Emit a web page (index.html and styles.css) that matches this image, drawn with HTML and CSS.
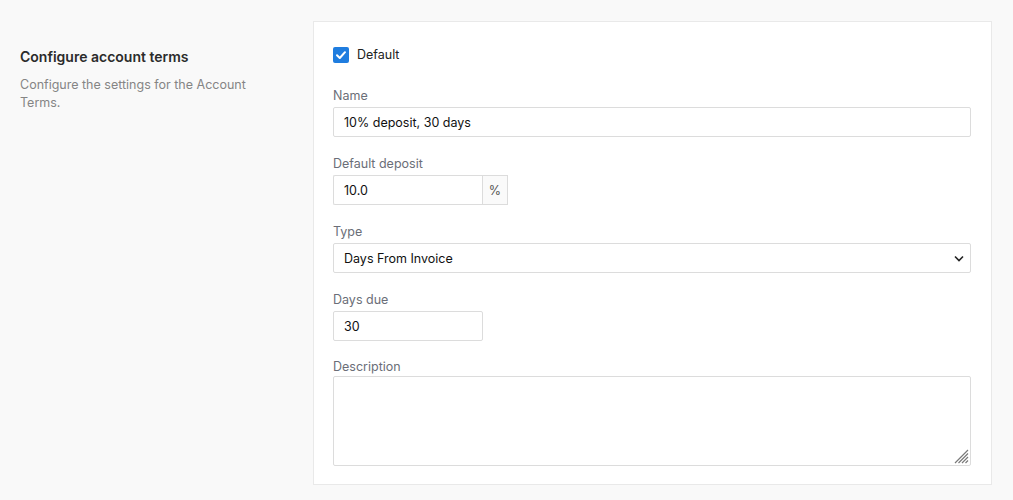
FILE: index.html
```html
<!DOCTYPE html>
<html>
<head>
<meta charset="utf-8">
<link rel="stylesheet" href="styles.css">
</head>
<body>
<div class="page">
  <div class="intro">
    <h2 class="intro-title">Configure account terms</h2>
    <p class="intro-text">Configure the settings for the Account Terms.</p>
  </div>
  <div class="card">
    <div class="check-row">
      <span class="check-box">
        <svg width="12" height="12" viewBox="0 0 12 12"><path d="M2 6.2 L4.8 9 L10 3.2" fill="none" stroke="#fff" stroke-width="2" stroke-linecap="round" stroke-linejoin="round"/></svg>
      </span>
      <span class="check-label">Default</span>
    </div>
    <div class="group">
      <div class="label">Name</div>
      <div class="input full">10% deposit, 30 days</div>
    </div>
    <div class="group">
      <div class="label">Default deposit</div>
      <div class="input-group">
        <div class="input short">10.0</div>
        <div class="addon">%</div>
      </div>
    </div>
    <div class="group">
      <div class="label">Type</div>
      <div class="input full select">
        <span>Days From Invoice</span>
        <svg width="10" height="7" viewBox="0 0 10 7"><path d="M1 1.5 L5 5.5 L9 1.5" fill="none" stroke="#222" stroke-width="1.6"/></svg>
      </div>
    </div>
    <div class="group tight">
      <div class="label">Days due</div>
      <div class="input short">30</div>
    </div>
    <div class="group last">
      <div class="label">Description</div>
      <div class="textarea">
        <svg class="grip" width="15" height="15" viewBox="0 0 15 15"><path d="M14 1 L1 14 M14 4.5 L4.5 14 M14 8 L8 14 M14 11.5 L11.5 14" stroke="#7a7a7a" stroke-width="1.2"/></svg>
      </div>
    </div>
  </div>
</div>
</body>
</html>
```
FILE: styles.css
```css
html, body {
  margin: 0;
  padding: 0;
  background: #f9f9f9;
  font-family: Inter, Roboto, "Liberation Sans", sans-serif;
}
.page {
  display: flex;
  padding: 21px 21px 0 20px;
  gap: 33px;
}
.intro {
  width: 260px;
  padding-top: 27px;
}
.intro-title {
  margin: 0;
  font-size: 14px;
  font-weight: 600;
  line-height: 18px;
  color: #2b2b2b;
}
.intro-text {
  margin: 10px 0 0;
  font-size: 12.5px;
  line-height: 18px;
  color: #858585;
}
.card {
  flex: 1;
  background: #fff;
  border: 1px solid #e9e9e9;
  padding: 23px 20px 18px 19px;
}
.check-row {
  display: flex;
  align-items: center;
  height: 19px;
  margin-bottom: 24px;
}
.check-box {
  width: 16px;
  height: 16px;
  background: #1f7ddf;
  border-radius: 2px;
  display: flex;
  align-items: center;
  justify-content: center;
  margin-right: 8px;
}
.check-label {
  font-size: 12.5px;
  color: #222;
}
.group {
  margin-bottom: 19px;
}
.group.tight {
  margin-bottom: 18px;
}
.group.last {
  margin-bottom: 0;
}
.label {
  font-size: 12.5px;
  line-height: 16px;
  color: #6b6e78;
  margin-bottom: 3px;
}
.group.last .label {
  margin-bottom: 1px;
}
.input {
  box-sizing: border-box;
  height: 30px;
  border: 1px solid #dcdcdc;
  border-radius: 2px;
  padding: 0 10px;
  display: flex;
  align-items: center;
  font-size: 12.5px;
  color: #111;
  background: #fff;
}
.input.full {
  width: 100%;
}
.input.short {
  width: 150px;
}
.input-group {
  display: flex;
}
.input-group .input {
  width: 149px;
  border-radius: 2px 0 0 2px;
  border-right: none;
}
.addon {
  box-sizing: border-box;
  height: 30px;
  width: 26px;
  border: 1px solid #dcdcdc;
  background: #fafafa;
  display: flex;
  align-items: center;
  justify-content: center;
  font-size: 12.5px;
  color: #555;
}
.select {
  justify-content: space-between;
  padding-right: 6px;
}
.textarea {
  box-sizing: border-box;
  height: 90px;
  width: 100%;
  border: 1px solid #dcdcdc;
  border-radius: 2px;
  background: #fff;
  position: relative;
}
.grip {
  position: absolute;
  right: 1px;
  bottom: 1px;
}
```
